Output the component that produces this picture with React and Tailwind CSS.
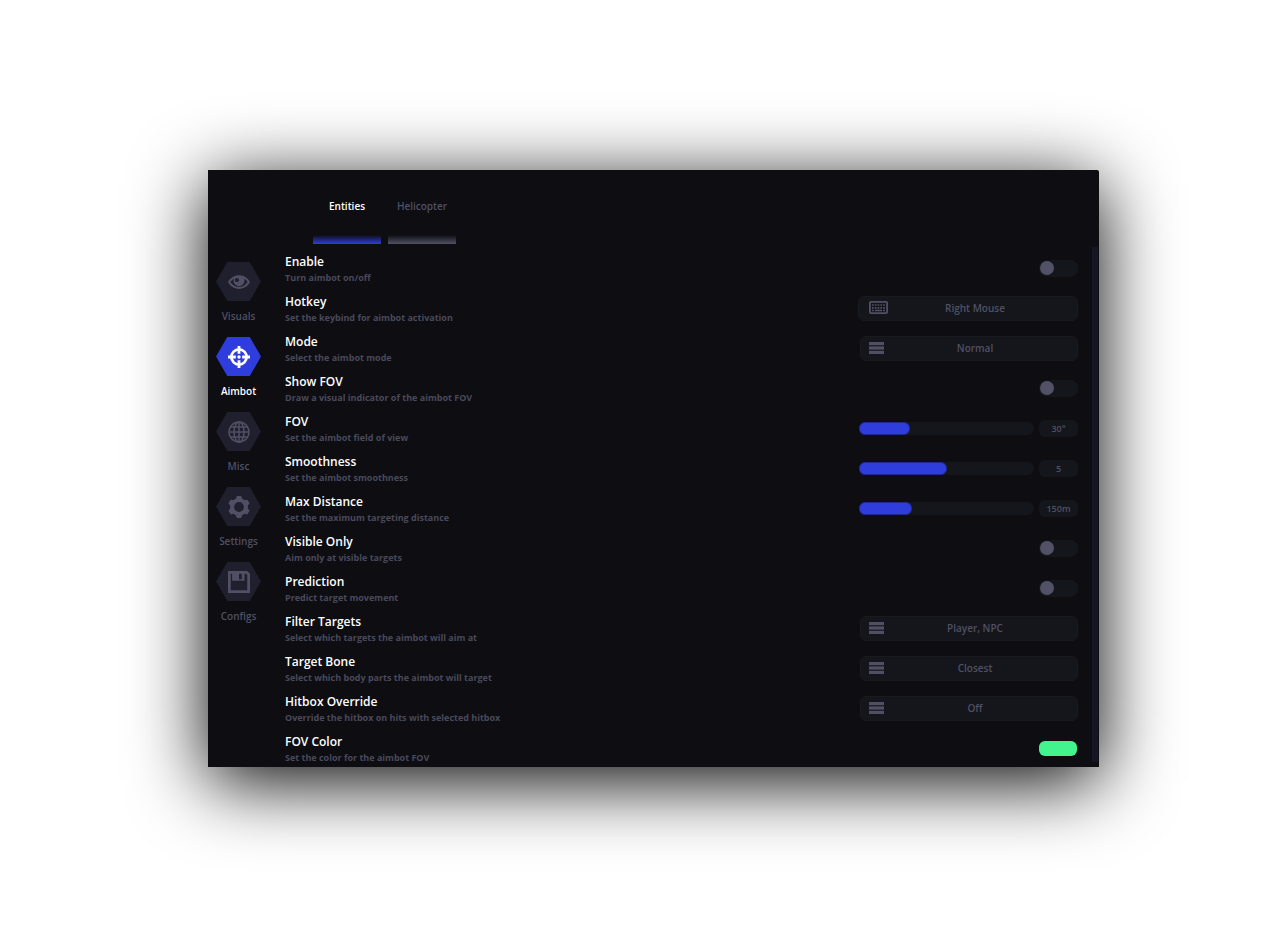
import { useState } from 'react';
import { ImEye, ImFloppyDisk } from 'react-icons/im';

const CrosshairIcon = () => (
    <svg className="w-[22px] h-[22px]" viewBox="0 0 22 22" fill="none" stroke="currentColor">
        <circle cx="11" cy="11" r="7.6" strokeWidth="2.7" />
        <circle cx="11" cy="11" r="1.7" fill="currentColor" stroke="none" />
        <path d="M11 0v7.8M11 14.2v7.8M0 11h7.8M14.2 11h7.8" strokeWidth="2.8" />
    </svg>
);

const GlobeIcon = () => (
    <svg className="w-[22px] h-[22px]" viewBox="0 0 22 22" fill="none" stroke="currentColor" strokeWidth="1.5">
        <circle cx="11" cy="11" r="10" />
        <ellipse cx="11" cy="11" rx="5" ry="10" />
        <path d="M11 1v20M1 11h20M2.6 6h16.8M2.6 16h16.8" />
    </svg>
);

const GearIcon = () => (
    <svg className="w-[22px] h-[22px]" viewBox="0 0 22 22" fill="currentColor">
        <circle cx="11" cy="11" r="6.9" fill="none" stroke="currentColor" strokeWidth="4" />
        {[0, 60, 120, 180, 240, 300].map(angle => (
            <path key={angle} d="M7.6 4 8.5.8Q8.7 0 9.5 0h3q.8 0 1 .8l.9 3.2z" transform={`rotate(${angle} 11 11)`} />
        ))}
    </svg>
);

const KeyboardIcon = () => (
    <svg className="w-[19px] h-[13px]" viewBox="0 0 19 13" fill="none" stroke="currentColor">
        <rect x=".9" y=".9" width="17.2" height="11.2" rx="1" strokeWidth="1.8" />
        <path d="M3 4h13M3 6.8h13" strokeWidth="1.7" strokeDasharray="1.7 1.1" />
        <path d="M3 9.6h1.8M6 9.6h7M14.2 9.6H16" strokeWidth="1.5" />
    </svg>
);

const BarsIcon = () => (
    <svg className="w-[15px] h-3" viewBox="0 0 15 12" fill="currentColor">
        <rect width="15" height="3.2" />
        <rect y="4.4" width="15" height="3.2" />
        <rect y="8.8" width="15" height="3.2" />
    </svg>
);

const NAV = [
    { name: 'Visuals', icon: <ImEye size={22} /> },
    { name: 'Aimbot', icon: <CrosshairIcon /> },
    { name: 'Misc', icon: <GlobeIcon /> },
    { name: 'Settings', icon: <GearIcon /> },
    { name: 'Configs', icon: <ImFloppyDisk size={22} /> },
];

const TABS = ['Entities', 'Helicopter'];

const ROWS = [
    { id: 'enable', title: 'Enable', text: 'Turn aimbot on/off', type: 'toggle' },
    { id: 'hotkey', title: 'Hotkey', text: 'Set the keybind for aimbot activation', type: 'hotkey', value: 'Right Mouse' },
    { id: 'mode', title: 'Mode', text: 'Select the aimbot mode', type: 'select', options: ['Normal', 'Silent'] },
    { id: 'show-fov', title: 'Show FOV', text: 'Draw a visual indicator of the aimbot FOV', type: 'toggle' },
    { id: 'fov', title: 'FOV', text: 'Set the aimbot field of view', type: 'slider', value: 30, min: 1, max: 100, unit: '°' },
    { id: 'smoothness', title: 'Smoothness', text: 'Set the aimbot smoothness', type: 'slider', value: 5, min: 0, max: 10, unit: '' },
    { id: 'distance', title: 'Max Distance', text: 'Set the maximum targeting distance', type: 'slider', value: 150, min: 0, max: 500, unit: 'm' },
    { id: 'visible', title: 'Visible Only', text: 'Aim only at visible targets', type: 'toggle' },
    { id: 'prediction', title: 'Prediction', text: 'Predict target movement', type: 'toggle' },
    { id: 'filter', title: 'Filter Targets', text: 'Select which targets the aimbot will aim at', type: 'select', options: ['Player, NPC', 'Player', 'NPC'] },
    { id: 'bone', title: 'Target Bone', text: 'Select which body parts the aimbot will target', type: 'select', options: ['Closest', 'Head', 'Chest'] },
    { id: 'hitbox', title: 'Hitbox Override', text: 'Override the hitbox on hits with selected hitbox', type: 'select', options: ['Off', 'Head', 'Chest'] },
    { id: 'fov-color', title: 'FOV Color', text: 'Set the color for the aimbot FOV', type: 'color', value: '#43f48e' },
];

function Toggle({ id }) {
    return (
        <input id={id} type="checkbox"
            className="appearance-none flex items-center w-[39px] h-[17px] px-px rounded-lg bg-[#14161b] cursor-pointer before:content-[''] before:w-[14px] before:h-[14px] before:rounded-full before:bg-[#525266] checked:justify-end checked:before:bg-[#303ddd]" />
    );
}

function Hotkey({ id, value }) {
    return (
        <button id={id} className="relative w-[220px] h-[25px] pl-[14px] rounded-md border border-[#181a1f] bg-[#14161b] text-center text-[10px]">
            <span className="absolute left-[10px] top-1"><KeyboardIcon /></span>
            {value}
        </button>
    );
}

function Select({ id, options }) {
    return (
        <div className="relative w-[218px]">
            <span className="absolute left-[9px] top-[6px] pointer-events-none"><BarsIcon /></span>
            <select id={id} className="appearance-none block w-full h-[25px] pl-3 rounded-md border border-[#181a1f] bg-[#14161b] text-center [text-align-last:center] text-[10px]">
                {options.map(o => <option key={o}>{o}</option>)}
            </select>
        </div>
    );
}

function Slider({ id, value: initial, min, max, unit }) {
    const [value, setValue] = useState(initial);
    const percent = ((value - min) / (max - min)) * 100;

    return (
        <div className="flex items-center gap-[5px]">
            <div className="relative w-[175px] h-[13px] rounded-md bg-[#14161b]">
                <div className="h-full rounded-md border border-[#20278f] bg-[#303ddd]" style={{ width: `${percent}%` }} />
                <input id={id} type="range" min={min} max={max} value={value}
                    onChange={e => setValue(Number(e.target.value))}
                    className="absolute inset-0 w-full h-full opacity-0 cursor-pointer" />
            </div>
            <output htmlFor={id} className="w-[39px] h-[17px] rounded-md bg-[#14161b] text-center text-[9px] leading-[17px]">
                {value}{unit}
            </output>
        </div>
    );
}

function ColorPicker({ id, value }) {
    return (
        <input id={id} type="color" defaultValue={value}
            className="appearance-none block w-[38px] h-[15px] mr-px rounded-md overflow-hidden cursor-pointer [&::-webkit-color-swatch-wrapper]:p-0 [&::-webkit-color-swatch]:border-0" />
    );
}

function Control({ row }) {
    if (row.type === 'toggle') return <Toggle id={row.id} />;
    if (row.type === 'hotkey') return <Hotkey id={row.id} value={row.value} />;
    if (row.type === 'select') return <Select id={row.id} options={row.options} />;
    if (row.type === 'slider') return <Slider {...row} />;
    return <ColorPicker id={row.id} value={row.value} />;
}

function App() {
    const [page, setPage] = useState('Aimbot');
    const [tab, setTab] = useState('Entities');

    return (
        <div className="min-h-screen bg-white pt-[170px] pb-[175px] pl-[208px] pr-[181px] font-['Open_Sans',sans-serif] font-semibold text-[#505064]">
            <div className="rounded-tr-xs bg-[#0d0d12] shadow-[0_14px_76px_#000]">

                <header className="flex gap-[7px] pl-[105px] pt-7">
                    {TABS.map(t => (
                        <button key={t} onClick={() => setTab(t)}
                            className={`w-[68px] text-[10px] leading-4 ${t === tab ? 'text-white' : ''}`}>
                            {t}
                            <span className={`block h-[9px] mt-[21px] bg-linear-to-t to-transparent ${t === tab ? 'from-[#303ddd]' : 'from-[#525266]'}`} />
                        </button>
                    ))}
                </header>

                <div className="flex mt-[3px]">
                    <nav className="flex flex-col gap-[13px] w-[53px] pl-2 pt-[15px]">
                        {NAV.map(({ name, icon }) => (
                            <button key={name} onClick={() => setPage(name)}
                                className={`flex flex-col items-center gap-[7px] text-[10px] leading-4 ${name === page ? 'text-white' : ''}`}>
                                <span className={`flex items-center justify-center w-[45px] h-[39px] [clip-path:polygon(25%_0,75%_0,100%_50%,75%_100%,25%_100%,0_50%)] ${name === page ? 'bg-[#303ddd]' : 'bg-[#1f1f2d]'}`}>
                                    {icon}
                                </span>
                                {name}
                            </button>
                        ))}
                    </nav>

                    <main className="flex-1 flex flex-col gap-[6px] pl-6 pr-[14px] pt-1 pb-[2px]">
                        {ROWS.map(row => (
                            <div key={row.id} className="flex justify-between h-[34px]">
                                <label htmlFor={row.id}>
                                    <span className="block text-[12px] leading-[21px] text-white">{row.title}</span>
                                    <span className="block text-[9px] leading-3 font-bold text-[#49495b]">{row.text}</span>
                                </label>
                                <div className="flex items-center">
                                    <Control row={row} />
                                </div>
                            </div>
                        ))}
                    </main>

                    {/* Scrollbar */}
                    <div className="w-[6px] mr-px mb-[5px] bg-[#161524]" />
                </div>
            </div>
        </div>
    );
}

export default App;
